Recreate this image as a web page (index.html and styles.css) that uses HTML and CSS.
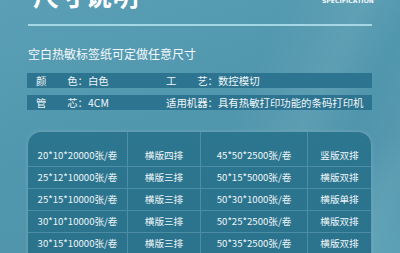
FILE: index.html
```html
<!DOCTYPE html>
<html lang="zh">
<head>
<meta charset="utf-8">
<link rel="stylesheet" href="styles.css">
</head>
<body>
<div class="page">
  <div class="head">
    <div class="title">尺寸说明</div>
    <div class="spec">SPECIFICATION</div>
  </div>
  <div class="rule"></div>
  <div class="sub">空白热敏标签纸可定做任意尺寸</div>
  <div class="info">
    <div class="bar">
      <div class="field"><span class="lab">颜色</span><span class="colon">：</span>白色</div>
      <div class="field"><span class="lab">工艺</span><span class="colon">：</span>数控模切</div>
    </div>
    <div class="bar">
      <div class="field"><span class="lab">管芯</span><span class="colon">：</span>4CM</div>
      <div class="field"><span class="lab">适用机器</span><span class="colon">：</span>具有热敏打印功能的条码打印机</div>
    </div>
  </div>
  <div class="table">
    <div class="cell">20*10*20000张/卷</div><div class="cell">横版四排</div><div class="cell">45*50*2500张/卷</div><div class="cell">竖版双排</div>
    <div class="cell">25*12*10000张/卷</div><div class="cell">横版三排</div><div class="cell">50*15*5000张/卷</div><div class="cell">横版双排</div>
    <div class="cell">25*15*10000张/卷</div><div class="cell">横版三排</div><div class="cell">50*30*1000张/卷</div><div class="cell">横版单排</div>
    <div class="cell">30*10*10000张/卷</div><div class="cell">横版三排</div><div class="cell">50*25*2500张/卷</div><div class="cell">横版双排</div>
    <div class="cell">30*15*10000张/卷</div><div class="cell">横版三排</div><div class="cell">50*35*2500张/卷</div><div class="cell">横版双排</div>
  </div>
</div>
</body>
</html>
```
FILE: styles.css
```css
html, body {
  margin: 0;
  padding: 0;
}
body {
  width: 400px;
  height: 253px;
  overflow: hidden;
  font-family: "Noto Sans CJK SC", "Noto Sans", sans-serif;
  color: #ffffff;
  background:
    linear-gradient(115deg, rgba(255,255,255,0) 55%, rgba(255,255,255,0.08) 70%, rgba(255,255,255,0) 80%, rgba(255,255,255,0.06) 92%, rgba(255,255,255,0) 100%),
    linear-gradient(160deg, #5a9fb5 0%, #5197ae 40%, #4f94ab 70%, #5ba0b5 100%);
}
.page {
  padding: 0 28px 0 27px;
}
.head {
  display: flex;
  justify-content: space-between;
  align-items: flex-start;
  height: 24px;
}
.title {
  font-size: 26px;
  line-height: 26px;
  font-weight: 700;
  letter-spacing: 0.5px;
  margin-top: -18px;
  margin-left: 6px;
}
.spec {
  font-family: "DejaVu Sans", sans-serif;
  font-size: 6px;
  line-height: 6px;
  font-weight: 700;
  letter-spacing: 0.1px;
  margin-top: -2px;
  margin-right: -2px;
  color: #f2f8fa;
}
.rule {
  height: 2px;
  margin-left: 1px;
  background: rgba(178, 224, 236, 0.85);
}
.sub {
  margin-top: 20px;
  margin-left: 1px;
  font-size: 12px;
  line-height: 16px;
  color: #f4f9fb;
}
.info {
  margin-top: 11px;
  display: flex;
  flex-direction: column;
  gap: 7px;
}
.bar {
  display: grid;
  grid-template-columns: 130px 1fr;
  height: 15px;
  padding-left: 9px;
  background: #2c7490;
  font-size: 10.4px;
  line-height: 15px;
  color: #f1f7f9;
}
.field {
  display: flex;
  white-space: nowrap;
}
.lab {
  display: inline-block;
  width: 4em;
  text-align: justify;
  text-align-last: justify;
}
.table {
  margin-top: 21px;
  display: grid;
  grid-template-columns: 100px 73px 107px 1fr;
  border: 1px solid rgba(200, 235, 245, 0.35);
  border-bottom: none;
  border-radius: 14px 14px 0 0;
  background: linear-gradient(180deg, #2d7690 0%, #2b738d 100%);
  box-shadow: 0 0 3px rgba(255, 255, 255, 0.15);
  overflow: hidden;
}
.cell {
  height: 21px;
  line-height: 21px;
  font-size: 9.6px;
  text-align: center;
  color: #eef6f8;
  border-bottom: 1px solid rgba(160, 210, 225, 0.28);
  border-right: 1px solid rgba(160, 210, 225, 0.28);
  white-space: nowrap;
}
.cell:nth-child(4n) {
  border-right: none;
}
.cell:nth-child(-n+4) {
  padding-top: 13px;
}
```
